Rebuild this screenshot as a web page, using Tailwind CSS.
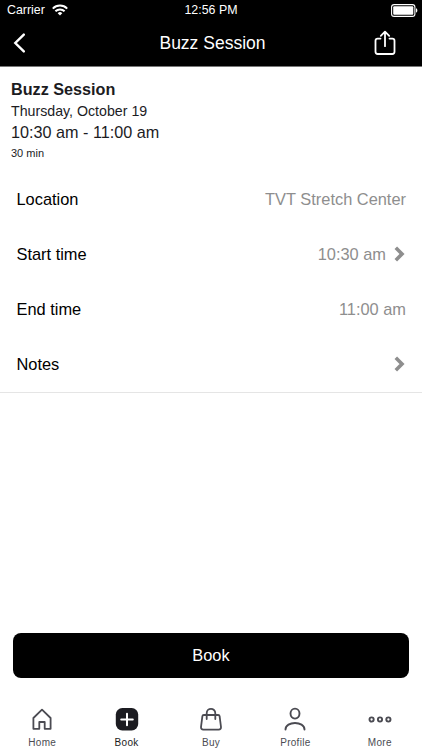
<!DOCTYPE html>
<html lang="en">
<head>
  <meta charset="UTF-8" />
  <meta name="viewport" content="width=device-width, initial-scale=1.0" />
  <title>Buzz Session</title>
  <script src="https://cdn.jsdelivr.net/npm/@tailwindcss/browser@4"></script>
</head>
<body class="bg-white font-['Liberation_Sans',Arial,sans-serif]">
  <div class="w-full h-[750px] flex flex-col overflow-hidden">
    <header class="bg-black text-white h-[67px] shrink-0 flex flex-col border-b border-[#777]">
      <!-- Status bar -->
      <div class="h-5 grid grid-cols-3 items-center pl-[7px] pr-1 text-[12.4px] leading-5">
        <div class="flex items-center gap-[7px]">
          <span>Carrier</span>
          <svg class="w-4 h-3" viewBox="0 0 16 12" fill="none" stroke="white" stroke-width="2">
            <path d="M.8 4.6a10.2 10.2 0 0 1 14.4 0M3.4 7.3a6.5 6.5 0 0 1 9.2 0" />
            <path d="M8 11.5 5.7 9.2a3.3 3.3 0 0 1 4.6 0z" fill="white" stroke="none" />
          </svg>
        </div>
        <span class="text-center whitespace-nowrap pr-[3px]">12:56 PM</span>
        <svg class="w-[27px] h-[13px] justify-self-end" viewBox="0 0 27 13" fill="none">
          <rect x=".6" y=".6" width="23.3" height="11.8" rx="2.5" stroke="white" stroke-width="1.1" />
          <rect x="2.2" y="2.2" width="20.1" height="8.6" rx="1" fill="white" />
          <path d="M25 4.3c1.8.6 1.8 3.8 0 4.4z" fill="white" />
        </svg>
      </div>
      <!-- Nav bar -->
      <div class="flex-1 grid grid-cols-3 items-center pl-[13px] pr-[26px]">
        <svg class="w-3 h-5" viewBox="0 0 12 20" fill="none" stroke="white" stroke-width="2.4" stroke-linecap="round">
          <path d="M10.8 1.6 2.3 10l8.5 8.4" />
        </svg>
        <h1 class="justify-self-center whitespace-nowrap text-[17.5px] leading-5 pl-[16px]">Buzz Session</h1>
        <svg class="w-[22px] h-[26px] justify-self-end" viewBox="0 0 22 26" fill="none" stroke="white" stroke-width="1.8" stroke-linecap="round" stroke-linejoin="round">
          <path d="M6.5 8.6H3.7q-2.200 0-2.200 2.200v11q0 2.200 2.200 2.200h14.600q2.200 0 2.200-2.200v-11q0-2.200-2.200-2.200H15.500M11 16.200V2M6.800 5.800 11 1.600 15.200 5.800" />
        </svg>
      </div>
    </header>

    <section class="pl-[11px] pt-3 text-[#1c1c1f]">
      <h2 class="text-[16.2px] leading-5 font-bold">Buzz Session</h2>
      <p class="text-[14.2px] leading-6">Thursday, October 19</p>
      <p class="text-[16.2px] leading-[19px]">10:30 am - 11:00 am</p>
      <p class="text-[11px] leading-[22px]">30 min</p>
    </section>

    <ul class="mt-2 h-[221px] pl-[16.5px] pr-4 text-[16.4px] border-b border-[#e5e5e5]">
      <li class="h-[55px] flex items-center justify-between">
        <span>Location</span>
        <span class="text-[#8e8e8e]">TVT Stretch Center</span>
      </li>
      <li class="h-[55px] flex items-center justify-between">
        <span>Start time</span>
        <span class="flex items-center gap-2 text-[#8e8e8e]">10:30 am
          <svg class="w-3 h-4 -mt-px" viewBox="0 0 12 16" fill="none" stroke="currentColor" stroke-width="3.6">
            <path d="m1.800 1.800 6.200 6.200-6.200 6.200" />
          </svg>
        </span>
      </li>
      <li class="h-[55px] flex items-center justify-between">
        <span>End time</span>
        <span class="text-[#8e8e8e]">11:00 am</span>
      </li>
      <li class="h-[55px] flex items-center justify-between">
        <span>Notes</span>
        <svg class="w-3 h-4 -mt-px text-[#8e8e8e]" viewBox="0 0 12 16" fill="none" stroke="currentColor" stroke-width="3.6">
          <path d="m1.800 1.800 6.200 6.200-6.200 6.200" />
        </svg>
      </li>
    </ul>

    <button class="mt-auto mx-[13px] h-[45px] shrink-0 rounded-lg bg-black text-white text-[16.4px]">Book</button>

    <!-- Tab bar -->
    <nav class="mt-[27px] h-[45px] shrink-0 grid grid-cols-5 text-[10px] leading-3 tracking-[0.3px] text-[#4b4b52]">
      <a class="flex flex-col items-center gap-[5px]">
        <svg class="w-6 h-[27px]" viewBox="0 0 24 27" fill="none" stroke="currentColor" stroke-width="1.8" stroke-linejoin="round">
          <path d="M3.400 23.800V13L12 4.600l8.600 8.400v10.800h-5.900v-6.800H9.300v6.800z" />
        </svg>
        Home
      </a>
      <a class="flex flex-col items-center gap-[5px] text-[#1c1c21]">
        <svg class="w-6 h-[27px]" viewBox="0 0 24 27">
          <rect x=".8" y="3" width="22.400" height="22.500" rx="6.500" fill="currentColor" />
          <path d="M12 8.700v11.600M6.200 14.500h11.600" stroke="white" stroke-width="2" stroke-linecap="round" />
        </svg>
        Book
      </a>
      <a class="flex flex-col items-center gap-[5px]">
        <svg class="w-6 h-[27px]" viewBox="0 0 24 27" fill="none" stroke="currentColor" stroke-width="1.800" stroke-linecap="round" stroke-linejoin="round">
          <path d="M4.800 10h14.400q1.200 0 1.400 1.200l1.400 10.800q.1 2.600-2.300 2.600H4.300q-2.400 0-2.300-2.600L3.400 11.200Q3.600 10 4.800 10zM7.700 14V8.200c0-5.700 8.600-5.700 8.600 0V14" />
        </svg>
        Buy
      </a>
      <a class="flex flex-col items-center gap-[5px]">
        <svg class="w-6 h-[27px]" viewBox="0 0 24 27" fill="none" stroke="currentColor" stroke-width="1.900" stroke-linecap="round">
          <ellipse cx="12" cy="8.600" rx="4.500" ry="5" />
          <path d="M2.500 24.600c0-8.800 19-8.800 19 0" />
        </svg>
        Profile
      </a>
      <a class="flex flex-col items-center gap-[5px]">
        <svg class="w-6 h-[27px]" viewBox="0 0 24 27" fill="none" stroke="currentColor" stroke-width="1.900">
          <circle cx="3.600" cy="14.500" r="2.100" />
          <circle cx="12" cy="14.500" r="2.100" />
          <circle cx="20.400" cy="14.500" r="2.100" />
        </svg>
        More
      </a>
    </nav>
  </div>
</body>
</html>
